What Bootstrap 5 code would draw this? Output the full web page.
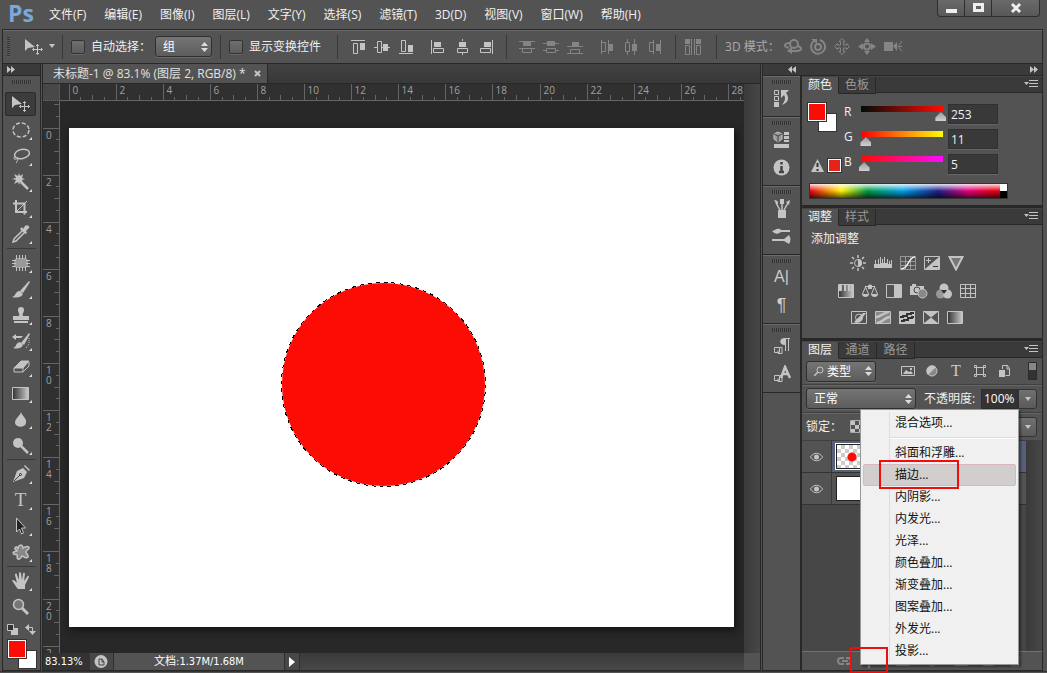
<!DOCTYPE html>
<html lang="zh-CN">
<head>
<meta charset="utf-8">
<meta name="viewport" content="width=device-width, initial-scale=1">
<title>未标题-1 @ 83.1%</title>
<link href="https://cdn.jsdelivr.net/npm/bootstrap@5.3.0/dist/css/bootstrap.min.css" rel="stylesheet">
<script src="https://cdn.jsdelivr.net/npm/bootstrap@5.3.0/dist/js/bootstrap.bundle.min.js"></script>
<style>
:root{--face:#535353;--edge:#282828;--deep:#3a3a3a;--lite:#6a6a6a;--ico:#c4c4c4}
body{font:12px/16px "Open Sans","Noto Sans CJK SC",sans-serif;color:#f0f0f0;background:var(--face);height:100vh;overflow:hidden}
svg{display:block;flex:none;fill:none;stroke:var(--ico)}
button,input,select{font:inherit;color:inherit}
button{border:0;background:none;padding:0}
.s{fill:var(--ico);stroke:none}
.fillonly{fill:var(--ico);stroke:none}
.topbar{height:29px}
.logo{font-size:23px;line-height:26px;font-weight:700;color:#7aa7dc;padding-left:8px;width:40px}
.topbar .nav-link{padding:0 9px;color:#f0f0f0}
.winbtns{border:1px solid #2e2e2e;border-top:0;border-radius:0 0 4px 4px;height:17px;margin-right:7px;background:linear-gradient(#6a6a6a,#585858);overflow:hidden}
.winbtns button{width:27px;height:16px;display:grid;place-items:center;border-right:1px solid #2e2e2e}
.winbtns button:last-child{width:47px;border:0}
.options{height:35px;margin:0 4px 0 2px;border:1px solid var(--edge);box-shadow:inset 0 1px var(--lite);color:#f0f0f0}
.grip-v{width:3px;height:20px;background:repeating-linear-gradient(#333 0 1px,#5c5c5c 1px 2px);margin-left:4px}
.vr-dark{width:1px;height:24px;background:#383838;flex:none}
.tick{appearance:none;width:14px;height:14px;margin:0;border:1px solid #333;border-radius:2px;background:linear-gradient(#707070,#5c5c5c);box-shadow:0 1px #666}
.tick:checked{background:#bbb}
.drop{appearance:none;height:21px;border:1px solid #2f2f2f;border-radius:3px;padding:0 16px 0 7px;line-height:17px;color:#fff;box-shadow:0 1px #686868;background:url("data:image/svg+xml,%3Csvg xmlns='http://www.w3.org/2000/svg' width='7' height='10'%3E%3Cpath d='M0 4L3.5 0 7 4zM0 6L3.5 10 7 6z' fill='%23ddd'/%3E%3C/svg%3E") no-repeat right 3px center,linear-gradient(#757575,#5c5c5c)}
.dim svg{stroke:#858585}.dim .s{fill:#858585}
.g24{display:flex;gap:8px}
.gap-l{margin-left:14px}
.gap-m{margin-left:6px}
.toolbox{width:39px;border:1px solid var(--edge);border-top:0;margin-left:2px;flex:none}
.strip{height:12px;background:var(--deep);border-bottom:1px solid var(--edge);flex:none}
.grip-h{width:20px;height:4px;background:repeating-linear-gradient(90deg,#303030 0 1px,#5c5c5c 1px 2px);margin:4px auto 0;flex:none}
.tools{margin-top:7px;flex:none}
.tool{height:26px;width:31px;display:grid;place-items:center;position:relative;margin-left:2px}
.tool.on{height:24px;margin-top:1px;margin-bottom:1px;background:#3c3c3c;border:1px solid #2b2b2b;border-radius:2px}
.tool.sub::after{content:"";position:absolute;right:4px;bottom:3px;border-left:3px solid transparent;border-bottom:3px solid #ddd}
.cut{height:1px;margin:1px 4px;background:#3a3a3a;flex:none}
.duo{position:relative;width:30px;height:30px}
.duo i{position:absolute;width:19px;height:19px;border:1px solid #333}
.duo .bg{right:0;bottom:0;background:#fff}
.duo .fg{left:0;top:0;background:#fd0b05;box-shadow:inset 0 0 0 1px #fff;width:20px;height:20px}
.doc{margin:0 1px;border:1px solid var(--edge);border-top:0;min-width:0}
.tabs{height:20px;background:linear-gradient(#424242,#383838);border-bottom:1px solid var(--edge);flex:none}
.doctab{background:var(--face);border-right:1px solid var(--edge);padding:0 6px 0 10px;color:#e2e2e2;height:19px;line-height:19px}
.ruler{background:#303030;stroke:#656565;shape-rendering:crispEdges}
.ruler text{fill:#a0a0a0;stroke:none;font-size:10px}
.corner{width:17px;height:17px;background:#484848;border-right:1px dotted #666;border-bottom:1px dotted #666;flex:none}
.bench{background:#282828;min-width:0;min-height:0;overflow:hidden;padding:27px 0 0 9px}
.sheet{width:665px;height:499px;background:#fff;box-shadow:2px 3px 8px #111}
.vscroll{width:16px;background:linear-gradient(90deg,#3a3a3a,#474747);flex:none}
.status{height:17px;background:#333;flex:none;font-family:"DejaVu Sans Condensed","Noto Sans CJK SC",sans-serif;font-size:11px;color:#fff}
.status>*{height:17px;line-height:17px}
.zoomin{width:47px;border:0;background:#333;padding:0 2px;color:#fff}
.seg{background:#484848;border-right:1px solid #2f2f2f}
.hscroll{background:linear-gradient(#3a3a3a,#484848)}
.side{width:281px;flex:none;border:1px solid var(--edge);border-top:0;margin-right:4px}
.dock{width:38px;border-right:1px solid var(--edge);flex:none}
.dgroup{border-bottom:1px solid var(--edge);box-shadow:inset 0 1px var(--lite);display:flow-root;padding-bottom:4px}
.dgroup button{height:28px;width:100%;display:grid;place-items:center}
.dgroup .grip-h{margin-bottom:0}
.panels{min-width:0}
.panel{border-left:1px solid var(--edge)}
.ptabs{height:17px;background:var(--deep);flex:none;border-top:1px solid #444}
.ptabs button{width:37px;height:17px;line-height:16px;color:#999;border-right:1px solid var(--edge);border-bottom:1px solid var(--edge)}
.ptabs .wide{width:38px}
.ptabs .now{background:var(--face);color:#f0f0f0;border-bottom-color:var(--face)}
.ptabs .rest{border-bottom:1px solid var(--edge)}
.pgap{border-bottom:3px solid var(--edge)}
.clr{height:112px;padding:9px 4px 0 5px}
.chips{width:37px;height:70px}
.chans{padding-top:2px}
.chan{height:25px}
.chan label{width:13px;height:18px}
.chan input[type=text]{width:50px;height:20px;background:#393939;border:1px solid #303030;box-shadow:0 1px #666;padding:0 2px;margin-left:1px}
.hue{appearance:none;width:90px;height:19px;margin:0;background:var(--ramp) no-repeat 4px 2px/82px 6px}
.hue::-webkit-slider-runnable-track{height:19px}
.hue::-webkit-slider-thumb{appearance:none;width:11px;height:9px;margin-top:8px;background:linear-gradient(#999,#d0d0d0);clip-path:polygon(50% 0,100% 60%,100% 100%,0 100%,0 60%)}
.red{--ramp:linear-gradient(90deg,#000b05,#ff0b05)}.green{--ramp:linear-gradient(90deg,#fd0005,#fdff05)}.blue{--ramp:linear-gradient(90deg,#fd0b00,#fd0bff)}
.spectrum{width:199px;height:16px;border:1px solid #333;margin-left:2px;background:linear-gradient(90deg,#fff0 190px,#fff 190px) 0 0/100% 7px no-repeat,linear-gradient(90deg,#0000 190px,#000 190px),linear-gradient(#fffd,#fff0 50%,#000a),linear-gradient(90deg,#e60012,#fff100 16%,#009944 29%,#00a0e9 47%,#1d2088 65%,#e4007f 80%,#e60012 94%)}
.adj{height:113px;padding:6px 9px}
.adj .rows{width:192px;gap:12px}
.frow{height:27px;padding:0 5px 0 4px;border-bottom:1px solid #404040;box-shadow:0 1px #666;flex:none}
.frow.tall{height:28px}
.arrowbtn{width:19px;height:20px;border:1px solid #333;border-radius:0 3px 3px 0;background:linear-gradient(#707070,#5a5a5a);display:grid;place-items:center}
.opac{width:37px;height:20px;background:#333;border:1px solid #2d2d2d;padding:0 2px;color:#fff}
.layers{background:#474747;min-height:0}
.layer{height:32px;border-bottom:1px solid #333;background:var(--face)}
.layer .eye{width:30px;height:31px;display:grid;place-items:center;background:var(--face);border-right:1px solid #3a3a3a}
.layer.cur{background:#566179}
.thumb{width:31px;height:25px;border:1px solid #222;margin-left:4px;background:#fff}
.thumb.chk{background:radial-gradient(circle at 15px 12px,#fd0b05 4px,#0000 5px),repeating-conic-gradient(#ccc 0 25%,#fff 0 50%) 0 0/8px 8px;outline:1px solid #fff}
.foot{height:19px;border-top:1px solid #707070;flex:none;padding-left:35px;gap:15px;position:relative}
.fxmenu{position:absolute;right:23px;bottom:5px;width:159px;height:256px;background:#f0f0f0;border:1px solid #979797;box-shadow:2px 2px 2px #0006;padding:2px;color:#000;list-style:none;margin:0}
.fxmenu button{display:block;width:100%;height:22px;text-align:left;padding-left:31px;border:1px solid transparent;border-radius:2px;color:#111;line-height:20px}
.fxmenu .hot{background:#d1cecd;border-color:#dbb6bb}
.fxmenu hr{margin:3px 0 3px 27px;border:0;height:2px;background:#ddd;opacity:1;border-bottom:1px solid #fff}
.fxmenu::before{content:"";position:absolute;left:28px;top:2px;bottom:2px;width:1px;background:#dedede}
.fxmenu li{position:relative}
.mark-item::after{content:"";position:absolute;left:16px;top:-4px;width:80px;height:29px;border:2px solid #f00d0d}
.mark-fx{position:absolute;left:48px;top:-4px;width:38px;height:26px;border:2px solid #f00d0d}
.base{height:2px;border-top:1px solid #333;flex:none}
</style>
</head>
<body class="d-flex flex-column">

<svg width="0" height="0" class="position-absolute">
<defs>
<linearGradient id="fade"><stop stop-color="#333"/><stop offset="1" stop-color="#ccc"/></linearGradient>
<symbol id="move" viewBox="0 0 20 18"><path class="s" d="M1 1v12l3-3 7-1z"/><path d="M13.500 6.500v10M8.500 11.500h10M12 8l1.500-1.500L15 8M12 15l1.500 1.500L15 15M10 10l-1.500 1.500L10 13M17 10l1.500 1.500L17 13"/></symbol>
</defs></svg>

<header class="topbar d-flex flex-shrink-0">
  <div class="logo">Ps</div>
  <nav class="nav flex-nowrap align-items-center flex-grow-1">
    <a class="nav-link" href="#">文件(F)</a><a class="nav-link" href="#">编辑(E)</a><a class="nav-link" href="#">图像(I)</a><a class="nav-link" href="#">图层(L)</a><a class="nav-link" href="#">文字(Y)</a><a class="nav-link" href="#">选择(S)</a><a class="nav-link" href="#">滤镜(T)</a><a class="nav-link" href="#">3D(D)</a><a class="nav-link" href="#">视图(V)</a><a class="nav-link" href="#">窗口(W)</a><a class="nav-link" href="#">帮助(H)</a>
  </nav>
  <div class="winbtns d-flex">
    <button aria-label="最小化"><svg width="11" height="12"><path style="fill:#eee" stroke="none" d="M0 7h11v4H0z"/></svg></button>
    <button aria-label="最大化"><svg width="11" height="10"><path d="M1.500 1.500h8v6h-8z" stroke="#eee" stroke-width="3"/></svg></button>
    <button aria-label="关闭"><svg width="12" height="10"><path d="M2 1l8 8M10 1L2 9" stroke="#eee" stroke-width="3"/></svg></button>
  </div>
</header>

<section class="options d-flex align-items-center flex-shrink-0">
  <span class="grip-v"></span>
  <svg class="gap-l" width="20" height="18"><use href="#move"/></svg>
  <svg class="ms-1" width="8" height="5"><path class="s" d="M1 0h6L4 4z"/></svg>
  <span class="vr-dark gap-m me-2"></span>
  <input class="tick" type="checkbox" id="auto"><label for="auto" class="gap-m">自动选择：</label>
  <select class="drop ms-1" style="width:57px" aria-label="选择对象"><option>组</option><option>图层</option></select>
  <span class="vr-dark ms-2 me-2"></span>
  <input class="tick" type="checkbox" id="box"><label for="box" class="gap-m me-3">显示变换控件</label>
  <span class="vr-dark me-2"></span>
  <div class="d-flex">
    <div class="g24 me-3 ms-1">
      <svg width="16" height="16"><path d="M1 1.500h14M3.500 4.500h4v10h-4z"/><path class="s" d="M10 4h5v7h-5z"/></svg>
      <svg width="16" height="16"><path d="M0 8.500h3M8 8.500h8M3.500 2.500h4v11h-4z"/><path class="s" d="M9 5h5v7H9z"/></svg>
      <svg width="16" height="16"><path d="M1 14.500h14M3.500 1.500h4v11h-4z"/><path class="s" d="M10 6h5v7h-5z"/></svg>
    </div>
    <div class="g24 me-2">
      <svg width="16" height="16"><path d="M1.500 1v14M3.500 9.500h10v4h-10z"/><path class="s" d="M4 3h7v5H4z"/></svg>
      <svg width="16" height="16"><path d="M8.500 0v2M8.500 14v2M3.500 9.500h10v4h-10z"/><path class="s" d="M5 3h7v5H5z"/></svg>
      <svg width="16" height="16"><path d="M14.500 1v14M2.500 9.500h10v4h-10z"/><path class="s" d="M6 3h7v5H6z"/></svg>
    </div>
  </div>
  <span class="vr-dark ms-1 me-2"></span>
  <div class="d-flex dim">
    <div class="g24 me-3 ms-1">
      <svg width="16" height="16"><path d="M0 2.500h16M0 9.500h16M3.500 9.500h9v4h-9z"/><path class="s" d="M4 3h8v4H4z"/></svg>
      <svg width="16" height="16"><path d="M0 4.500h16M0 11.500h3M13 11.500h3M3.500 9.500h9v4h-9z"/><path class="s" d="M4 2h8v5H4z"/></svg>
      <svg width="16" height="16"><path d="M0 7.500h16M0 14.500h16M3.500 10.500h9v4h-9z"/><path class="s" d="M5 3h7v4H5z"/></svg>
    </div>
    <div class="g24 me-2">
      <svg width="16" height="16"><path d="M2.500 1v14M9.500 1v14M2.500 3.500h4v9h-4z"/><path class="s" d="M10 5h4v7h-4z"/></svg>
      <svg width="16" height="16"><path d="M4.500 0v3M4.500 13v3M11.500 0v16M2.500 3.500h4v9h-4z"/><path class="s" d="M9 5h5v7H9z"/></svg>
      <svg width="16" height="16"><path d="M6.500 1v14M13.500 1v14M2.500 3.500h4v9h-4z"/><path class="s" d="M9 5h5v7H9z"/></svg>
    </div>
  </div>
  <span class="vr-dark ms-1 me-2"></span>
  <div class="dim"><svg width="18" height="16"><path d="M1.500 6.500h4v9h-4zM12.500 6.500h4v9h-4zM7.500 0v16M10.500 0v16"/><path class="s" d="M1 0h5v5H1zM12 0h5v5h-5z"/></svg></div>
  <span class="vr-dark gap-l me-2"></span>
  <span style="color:#aaa">3D 模式：</span>
  <div class="g24 dim ms-1">
    <svg width="18" height="17"><circle cx="10" cy="6" r="4" stroke-width="2"/><path stroke-width="2" d="M6 5c-6 0-7 4-1 5M14 8c5 2 4 5-3 5H6"/><path class="s" d="M8 9v7l-5-3z"/></svg>
    <svg width="16" height="17"><circle cx="8" cy="9" r="3" stroke-width="2"/><path stroke-width="2" d="M4 3a7 7 0 1 0 6-1"/><path class="s" d="M1 1h6v5z"/></svg>
    <svg width="16" height="17"><path d="M8 .5l3 3H9.500v3.500h3V5.500l3 3-3 3V10h-3v3.500H11l-3 3-3-3h1.500V10h-3v1.500l-3-3 3-3V7h3V3.500H5z"/></svg>
    <svg width="18" height="17"><circle cx="9" cy="8.500" r="3" stroke-width="2"/><path class="s" d="M6 4l3-4 3 4zM6 13l3 4 3-4zM5 5L0 8.500 5 12zM13 5l5 3.500L13 12z"/></svg>
    <svg width="19" height="17"><path class="s" d="M0 4h9v9H0zM9 8l4-4v9z"/><path d="M18 3l-4 5.500 4 5M15 8.500h3"/></svg>
  </div>
</section>

<main class="d-flex flex-grow-1" style="min-height:0">
  <aside class="toolbox d-flex flex-column">
    <div class="strip d-flex align-items-center ps-1"><svg width="8" height="7"><path class="s" d="M0 0l4 3.500L0 7zM4 0l4 3.500L4 7z"/></svg></div>
    <div class="grip-h"></div>
    <div class="tools">
      <button class="tool on" aria-label="移动"><svg width="20" height="18"><use href="#move"/></svg></button>
      <button class="tool sub" aria-label="椭圆选框"><svg width="18" height="16"><ellipse cx="9" cy="8" rx="8" ry="7" stroke-dasharray="4 2" stroke-width="1.500"/></svg></button>
      <button class="tool sub" aria-label="套索"><svg width="18" height="16"><ellipse cx="10" cy="6" rx="7.500" ry="4.500" transform="rotate(-12 10 6)" stroke-width="1.500"/><path d="M3 9c-2 1-1 3 1 2s2 2 0 4"/></svg></button>
      <button class="tool sub" aria-label="魔棒"><svg width="18" height="18"><path class="s" d="M7 0l1 3 3-2-1 4 3 1-3 1 1 4-3-2-1 3-1-3-4 2 2-4-4-1 4-1-2-4 4 2z"/><path d="M9 9l7 7" stroke-width="2.500"/></svg></button>
      <button class="tool sub" aria-label="裁剪"><svg width="18" height="18"><path d="M4 1v12h11M1 4.500h11.500v11" stroke-width="2"/><path d="M5 12L15 2"/></svg></button>
      <button class="tool sub" aria-label="吸管"><svg width="18" height="18"><path d="M10 6l-8 8-1 3 3-1 8-8" stroke-width="1.500"/><path class="s" d="M10 2l1 2 2-3c2-2 5 0 4 2l-3 3 1 2-2 1-5-5z"/></svg></button>
      <div class="cut"></div>
      <button class="tool sub" aria-label="修补"><svg width="18" height="16"><rect style="fill:#999" stroke="none" x="2" y="3" width="14" height="10" rx="4"/><path d="M4.500 0v4M7.500 0v4M10.500 0v4M13.500 0v4M4.500 12v4M7.500 12v4M10.500 12v4M13.500 12v4M0 5.500h4M0 8.500h4M0 11.500h4M14 5.500h4M14 8.500h4M14 11.500h4"/></svg></button>
      <button class="tool sub" aria-label="画笔"><svg width="18" height="17"><path class="s" d="M17 0l1 1-7 11-3-2zM8 10l3 3c-2 4-7 4-11 3 4-1 3-6 8-6z"/></svg></button>
      <button class="tool sub" aria-label="图章"><svg width="18" height="17"><path class="s" d="M6 3a3 3 0 0 1 6 0c0 3-2 3-1 6h6v4H1V9h6c1-3-1-3-1-6zM2 14h14v2H2z"/></svg></button>
      <button class="tool sub" aria-label="历史记录画笔"><svg width="18" height="17"><path class="s" d="M17 0l1 1-6 11-3-2zM8 9l3 3c-2 4-6 4-10 3 4-1 2-5 7-6zM0 4l4-3v2h7l-2 2H4v2z"/><path stroke-dasharray="1 1" d="M17 5v6l-3 4"/></svg></button>
      <button class="tool sub" aria-label="橡皮擦"><svg width="18" height="16"><path class="s" d="M9 2h8l-6 7H2z"/><path d="M17 3v4l-6 6H2V9l7-7h8l-6 7v4M2 9h9"/></svg></button>
      <button class="tool sub" aria-label="渐变"><svg width="17" height="13"><path fill="url(#fade)" d="M.5.500h16v12H.5z"/></svg></button>
      <button class="tool sub" aria-label="模糊"><svg width="14" height="17"><path class="s" d="M7 1c1 4 6 6 5 11-1 5-10 5-11 0C1 7 6 5 7 1z"/></svg></button>
      <button class="tool sub" aria-label="减淡"><svg width="18" height="17"><circle class="s" cx="6" cy="6" r="5"/><path stroke-width="2.500" d="M9 9l7 7"/></svg></button>
      <div class="cut"></div>
      <button class="tool sub" aria-label="钢笔"><svg width="18" height="18"><path class="s" d="M11 3l4 4-3 6-11 4 4-11zM12 1l1-1 5 5-1 1z"/><path stroke="#444" d="M2 16l6-6"/><circle cx="8.500" cy="9.500" r="1" stroke="#333"/></svg></button>
      <button class="tool sub" aria-label="文字" style="font:19px/22px 'Liberation Serif',serif;color:#c4c4c4">T</button>
      <button class="tool sub" aria-label="路径选择"><svg width="14" height="18"><path fill="#222" d="M2.500 1v14l3-3 2 5 2-1-2-5h4z"/></svg></button>
      <button class="tool sub" aria-label="自定形状"><svg width="18" height="16"><path fill="#888" stroke-width="1.500" d="M6 5c0-5 5-5 5-1 3-2 6-2 6 0s-3 2-3 4 3 3 2 5-4 0-6-1c-1 2-2 4-4 3s0-3-1-4-4 0-4-2 3-1 4-2-3-1-2-3 2-1 3 1z"/></svg></button>
      <div class="cut"></div>
      <button class="tool sub" aria-label="抓手"><svg width="18" height="18"><path class="s" d="M5 16L1 10c-2-2 0-3 2-1l2 2L3 3c0-2 2-2 2 0l2 5V1c0-1 2-1 2 0l1 7 1-6c0-2 2-1 2 0l-1 7 3-4c1-2 2-1 2 0l-4 8v4H6z"/></svg></button>
      <button class="tool" aria-label="缩放"><svg width="18" height="18"><circle cx="6.500" cy="6.500" r="5" fill="#777" stroke-width="1.500"/><path stroke-width="3" d="M10 10l6 6"/></svg></button>
    </div>
    <div class="d-flex justify-content-between px-1 pt-1 flex-shrink-0">
      <svg width="11" height="11"><path class="s" d="M4 4h7v7H4z"/><path fill="#333" d="M.5.500h6v6h-6z"/></svg>
      <svg width="11" height="11"><path d="M2 3.500h5.500V9"/><path class="s" d="M0 3.500L4 0v7zM4 7h7l-3.500 4z"/></svg>
    </div>
    <div class="duo ms-1 mt-1 flex-shrink-0"><i class="bg"></i><i class="fg"></i></div>
  </aside>

  <section class="doc d-flex flex-column flex-grow-1">
    <div class="tabs d-flex"><div class="doctab d-flex align-items-center"><span>未标题-1 @ 83.1% (图层 2, RGB/8) *</span><button class="ms-2" aria-label="关闭文档"><svg width="7" height="7"><path stroke-width="2" d="M1 1l5 5M6 1L1 6"/></svg></button></div></div>
    <div class="d-flex flex-grow-1" style="min-height:0">
      <div class="d-flex flex-column flex-grow-1" style="min-width:0">
        <div class="d-flex flex-shrink-0"><div class="corner"></div><svg id="rulerX" class="ruler flex-grow-1" width="10" height="17"></svg></div>
        <div class="d-flex flex-grow-1" style="min-height:0">
          <svg id="rulerY" class="ruler" width="17" height="100%"></svg>
          <div class="bench flex-grow-1">
            <div class="sheet"><svg width="665" height="499"><circle cx="314.500" cy="256.500" r="102" fill="#fd0b05" stroke="#fff"/><circle cx="314.500" cy="256.500" r="102" stroke="#000" stroke-dasharray="4 4" shape-rendering="crispEdges"/></svg></div>
          </div>
        </div>
      </div>
      <div class="vscroll"></div>
    </div>
    <div class="status d-flex">
      <input class="zoomin" type="text" value="83.13%" aria-label="显示比例">
      <span class="seg d-flex align-items-center"><svg class="mx-1" width="15" height="13"><circle class="s" cx="7" cy="6.500" r="6.500"/><path stroke="#444" d="M5 4v6h5V7L8 4H5M8 4v3h2"/></svg></span>
      <span class="seg text-center" style="width:171px;background:#535353">文档:1.37M/1.68M</span>
      <button class="seg px-1" aria-label="状态菜单"><svg width="6" height="10"><path fill="#fff" stroke="none" d="M0 0l6 5-6 5z"/></svg></button>
      <span class="hscroll flex-grow-1"></span><span style="width:16px;background:#535353"></span>
    </div>
  </section>

  <aside class="side d-flex flex-column">
    <div class="strip d-flex align-items-center justify-content-between">
      <svg style="margin-left:25px" width="8" height="7"><path class="s" d="M4 0L0 3.500 4 7zM8 0L4 3.500 8 7z"/></svg>
      <svg class="me-1" width="8" height="7"><path class="s" d="M0 0l4 3.500L0 7zM4 0l4 3.500L4 7z"/></svg>
    </div>
    <div class="d-flex flex-grow-1" style="min-height:0">
      <nav class="dock">
        <div class="dgroup"><div class="grip-h"></div>
          <button aria-label="历史记录"><svg width="17" height="18"><path d="M1.500 1.500h4v4h-4zM1.500 7.500h4v4h-4z"/><path class="s" d="M1 13h5v5H1zM8 1h8l-3 3c4 5 2 10-4 12 3-4 4-7 2-10L8 9z"/></svg></button></div>
        <div class="dgroup"><div class="grip-h"></div>
          <button aria-label="属性"><svg width="17" height="17"><path class="s" d="M11 1h5v3h-5zM11 5h5v3h-5zM11 9h5v2h-5zM1 13h15v4H1z"/><path fill="#999" d="M5 1l4 2v5l-4 3-4-3V3z"/><path stroke="#444" d="M1 3l4 2 4-2M5 5v6"/></svg></button>
          <button aria-label="信息"><svg width="17" height="17"><circle class="s" cx="8.500" cy="8.500" r="8"/><path stroke="#444" stroke-width="2.500" d="M8.500 3v2.500M8.500 7v6M6 13h5"/></svg></button></div>
        <div class="dgroup"><div class="grip-h"></div>
          <button aria-label="画笔预设"><svg width="17" height="19"><path class="s" d="M5 11h8v8H5zM1 1c4 0 5 3 3 5zM7 0h4v5H7zM13 3l4-2-1 5z"/><path stroke-width="1.500" d="M3 4l4 7M9 4v7M15 4l-4 7"/></svg></button>
          <button aria-label="画笔"><svg width="19" height="16"><path class="s" d="M0 3c3 0 4-3 8-2l1 1h9v2H9C5 7 3 6 0 3zM0 11h12l5-4c2 3 2 6 0 9l-5-3H0z"/></svg></button></div>
        <div class="dgroup"><div class="grip-h"></div>
          <button aria-label="字符" style="font:16px/18px 'Liberation Sans',sans-serif;color:#ccc">A|</button>
          <button aria-label="段落" style="font:18px/18px 'Liberation Sans',sans-serif;color:#ccc">¶</button></div>
        <div class="dgroup"><div class="grip-h"></div>
          <button aria-label="段落样式"><svg width="18" height="18"><path d="M1.500 10.500h5v5h-5zM5 13.500v3h4v-6H7M12.500 1v13M15.500 1v13"/><path class="s" d="M13 1c-7-1-8 7-1 7z"/><path d="M11 1.500h6"/></svg></button>
          <button aria-label="字符样式"><svg width="18" height="18"><path d="M1.500 10.500h5v5h-5zM5 13.500v3h4v-6H7"/><path stroke-width="2.500" d="M8 13l4-11 5 11M9.500 9h6"/></svg></button></div>
      </nav>

      <div class="panels d-flex flex-column flex-grow-1">
        <section class="panel pgap">
          <div class="ptabs d-flex"><button class="now">颜色</button><button>色板</button><span class="rest flex-grow-1 d-flex justify-content-end align-items-center pe-1"><svg width="14" height="9"><path d="M5 .5h9M5 3.500h9M5 6.500h9"/><path class="s" d="M0 2h5L2.500 5z"/></svg></span></div>
          <div class="clr">
            <div class="d-flex">
              <div class="chips d-flex flex-column justify-content-between">
                <div class="duo"><i class="bg"></i><i class="fg"></i></div>
                <div class="d-flex align-items-center gap-1 ms-1"><svg width="13" height="13"><path class="s" d="M6.500 0L13 13H0z"/><path stroke="#333" stroke-width="2" d="M6.500 4v4M6.500 10v2"/></svg><span style="width:13px;height:13px;border:1px solid #fff;background:#e6231a;outline:1px solid #333"></span></div>
              </div>
              <div class="chans">
                <div class="chan d-flex"><label for="rv">R</label><input class="hue red" type="range" max="255" value="253" aria-label="R"><input id="rv" type="text" value="253"></div>
                <div class="chan d-flex"><label for="gv">G</label><input class="hue green" type="range" max="255" value="11" aria-label="G"><input id="gv" type="text" value="11"></div>
                <div class="chan d-flex"><label for="bv">B</label><input class="hue blue" type="range" max="255" value="5" aria-label="B"><input id="bv" type="text" value="5"></div>
              </div>
            </div>
            <div class="spectrum mt-1"></div>
          </div>
        </section>

        <section class="panel pgap">
          <div class="ptabs d-flex"><button class="now">调整</button><button>样式</button><span class="rest flex-grow-1 d-flex justify-content-end align-items-center pe-1"><svg width="14" height="9"><path d="M5 .5h9M5 3.500h9M5 6.500h9"/><path class="s" d="M0 2h5L2.500 5z"/></svg></span></div>
          <div class="adj">
            <div>添加调整</div>
            <div class="rows d-flex flex-column mt-2">
              <div class="d-flex justify-content-center gap-2">
                <svg width="16" height="16"><circle cx="8" cy="8" r="3.500"/><path class="s" d="M8 4a4 4 0 0 1 0 8z"/><path stroke-width="1.500" d="M8 0v3M8 13v3M0 8h3M13 8h3M2 2l2 2M12 12l2 2M14 2l-2 2M4 12l-2 2"/></svg>
                <svg width="18" height="16"><path class="s" d="M0 13V9h1V5h1v4h2V4h1v5h1V2h1v6h1V4h1v4h1V2h1v6h2V4h1v5h1V6h1v3h1V5h1v8z"/></svg>
                <svg width="16" height="16"><path d="M.5 1.500h15v13H.5zM5.500 2v12M10.500 2v12M1 6.500h14M1 10.500h14" opacity=".6"/><path stroke="#eee" stroke-width="1.500" d="M1 14c8 0 7-12 14-12"/></svg>
                <svg width="16" height="16"><path d="M.5 1.500h15v13H.5z"/><path class="s" d="M15 2v12H1z"/><path d="M2 5.500h5M4.500 3v5"/><path stroke="#333" d="M9 11.500h5"/></svg>
                <svg width="16" height="16"><path fill="#777" stroke-width="2" d="M1.500 2h13L8 14.500z"/></svg>
              </div>
              <div class="d-flex justify-content-center gap-2">
                <svg width="16" height="16"><path fill="url(#fade)" d="M.5 1.500h15v13H.5z"/><path class="s" d="M1 2h3v6H1zM6 2h2v6H6zM10 2h2v6h-2zM13 2h2v6h-2z"/></svg>
                <svg width="16" height="16"><path d="M8 1v4M3 3.500h10M3.500 4l-3 7M3.500 4l3 7M12.500 4l-3 7M12.500 4l3 7"/><path class="s" d="M0 11h7c0 4-7 4-7 0zM9 11h7c0 4-7 4-7 0zM6 2h4v4H6z"/></svg>
                <svg width="16" height="16"><path d="M.5 1.500h15v13H.5z"/><path class="s" d="M8 2h7v12H8z"/></svg>
                <svg width="18" height="16"><path class="s" d="M0 3h2V1h4v2h8v9H0z"/><circle cx="7" cy="7" r="3" stroke="#444"/><circle cx="12.500" cy="10.500" r="4.500" fill="#888"/></svg>
                <svg width="16" height="16"><circle class="s" cx="8" cy="5" r="4.500"/><circle style="fill:#999" stroke="none" cx="4.500" cy="11" r="4.500"/><circle class="s" cx="11.500" cy="11" r="4.500"/><path fill="#333" stroke="none" d="M5 7h6l-3 4z"/></svg>
                <svg width="16" height="16"><path d="M.5 1.500h15v13H.5zM5.500 2v12M10.500 2v12M1 5.500h14M1 10.500h14"/></svg>
              </div>
              <div class="d-flex justify-content-center gap-2">
                <svg width="16" height="14"><path d="M.5.500h15v12H.5z"/><path class="s" d="M3 11l9-9h3l-3 4c-1 6-6 7-9 5z"/><circle cx="8" cy="6.500" r="3.500"/></svg>
                <svg width="16" height="14"><path fill="#888" d="M.5.500h15v12H.5z"/><path stroke-width="2.500" d="M1 6c5 0 8-5 13-5M2 12c5 0 8-6 13-6"/></svg>
                <svg width="16" height="14"><path class="s" d="M0 0h16v13H0z"/><path stroke="#333" stroke-width="2" d="M1 6h3V5h4V3h4V2h3M2 10h3V9h4V7h4V6h2"/></svg>
                <svg width="16" height="14"><path class="s" d="M0 0l8 6.500L16 0zM0 13l8-6.500 8 6.500z"/><path d="M.5.500h15v12H.5z"/></svg>
                <svg width="16" height="14"><path fill="url(#fade)" d="M.5.500h15v12H.5z"/></svg>
              </div>
            </div>
          </div>
        </section>

        <section class="panel d-flex flex-column flex-grow-1 position-relative" style="min-height:0">
          <div class="ptabs d-flex"><button class="now">图层</button><button class="wide">通道</button><button class="wide">路径</button><span class="rest flex-grow-1 d-flex justify-content-end align-items-center pe-1"><svg width="14" height="9"><path d="M5 .5h9M5 3.500h9M5 6.500h9"/><path class="s" d="M0 2h5L2.500 5z"/></svg></span></div>
          <div class="frow d-flex align-items-center">
            <div class="position-relative"><select class="drop" style="width:70px;padding-left:20px" aria-label="过滤"><option>类型</option></select><svg class="position-absolute top-50 translate-middle-y start-0 ms-2" width="10" height="10"><circle cx="6" cy="4" r="3"/><path d="M4 6L0 10" stroke-width="1.500"/></svg></div>
            <div class="d-flex gap-2 ms-auto align-items-center">
              <svg width="16" height="16"><path d="M1.500 3.500h13v9h-13z"/><path class="s" d="M3 11l3-4 3 2 2-1 2 3zM10 5h2v2h-2z"/></svg>
              <svg width="16" height="16"><circle cx="8" cy="8" r="5" fill="#888"/><path class="s" d="M4 12A5.500 5.500 0 0 1 12 4z"/></svg>
              <span class="text-center" style="width:16px;font:16px/16px 'Liberation Serif',serif;color:#ccc">T</span>
              <svg width="16" height="16"><path d="M4.500 4.500h7v7h-7zM2.500 2.500h2v2h-2zM11.500 2.500h2v2h-2zM2.500 11.500h2v2h-2zM11.500 11.500h2v2h-2z"/></svg>
              <svg width="16" height="16"><path d="M6.500 6V2.500h5l2 3v7h-4M11 2v4h3"/><path class="s" d="M3 7h6v7H3z"/></svg>
              <svg class="ms-2" width="9" height="18"><path fill="#333" stroke="#2b2b2b" d="M.5.500h8v17h-8z"/><path fill="#888" stroke="none" d="M1 1h7v7H1z"/></svg>
            </div>
          </div>
          <div class="frow tall d-flex align-items-center">
            <select class="drop" style="width:110px" aria-label="混合模式"><option>正常</option></select>
            <label for="op" class="ms-2 text-nowrap">不透明度:</label>
            <input id="op" class="opac ms-auto" type="text" value="100%"><button class="arrowbtn" aria-label="不透明度滑块"><svg width="6" height="4"><path class="s" d="M0 0h6L3 4z"/></svg></button>
          </div>
          <div class="frow tall d-flex align-items-center"><span class="me-2">锁定：</span><svg width="13" height="13" class="fillonly"><path d="M1 1h4v4H1zM9 1h3v4H9zM5 5h4v4H5zM1 9h4v3H1zM9 9h3v3H9z"/><path fill="none" stroke="#aaa" d="M.5.500h12v12H.5z"/></svg><button class="arrowbtn ms-auto" aria-label="填充滑块"><svg width="6" height="4"><path class="s" d="M0 0h6L3 4z"/></svg></button></div>
          <div class="layers d-flex flex-grow-1">
            <div class="flex-grow-1">
              <div class="layer cur d-flex align-items-center"><button class="eye" aria-label="可见性"><svg width="13" height="10"><path d="M.5 5c3-5 9-5 12 0-3 5-9 5-12 0z"/><circle class="s" cx="6.500" cy="5" r="2.500"/></svg></button><div class="thumb chk"></div></div>
              <div class="layer d-flex align-items-center"><button class="eye" aria-label="可见性"><svg width="13" height="10"><path d="M.5 5c3-5 9-5 12 0-3 5-9 5-12 0z"/><circle class="s" cx="6.500" cy="5" r="2.500"/></svg></button><div class="thumb"></div></div>
            </div>
            <div class="vscroll"></div>
          </div>
          <div class="foot d-flex align-items-center dim">
            <svg width="16" height="10"><path stroke-width="2" d="M7 2H4a3 3 0 0 0 0 6h3M9 2h2a3 3 0 0 1 0 6H9M5 5h6"/></svg>
            <span style="color:#bbb;font:italic 13px/14px 'Liberation Serif',serif">fx.</span>
            <svg width="14" height="12"><path d="M.5.500h13v10H.5z"/></svg>
            <svg width="14" height="12"><circle cx="7" cy="6" r="5"/></svg>
            <svg width="14" height="12"><path d="M.5 1.500h13v9H.5z"/></svg>
            <svg width="12" height="12"><path d="M.5.500h10v10H.5z"/></svg>
            <svg width="10" height="12"><path d="M1.500 2v9h7V2M0 2.500h10M5 3v8"/></svg>
          </div>
          <ul class="fxmenu">
            <li><button>混合选项...</button></li>
            <li><hr></li>
            <li><button>斜面和浮雕...</button></li>
            <li class="mark-item"><button class="hot">描边...</button></li>
            <li><button>内阴影...</button></li>
            <li><button>内发光...</button></li>
            <li><button>光泽...</button></li>
            <li><button>颜色叠加...</button></li>
            <li><button>渐变叠加...</button></li>
            <li><button>图案叠加...</button></li>
            <li><button>外发光...</button></li>
            <li><button>投影...</button></li>
          </ul>
          <div class="position-absolute bottom-0 start-0" style="height:19px"><div class="mark-fx"></div></div>
        </section>
      </div>
    </div>
  </aside>
</main>
<div class="base"></div>

<script>
// Ruler marks: one label every 2 units, with quarter marks between the labels.
const STEP = 47.1;
function rule(svg, vertical, origin, length) {
  let out = '';
  for (let i = -4; i * STEP / 4 + origin < length; i++) {
    const p = Math.floor(origin + i * STEP / 4) + 0.5;
    if (p < 0) continue;
    const major = i % 4 === 0, size = major ? 16 : i % 2 ? 3 : 5;
    out += vertical ? `<path d="M${16 - size} ${p}H16"/>` : `<path d="M${p} ${16 - size}V16"/>`;
    if (major && i >= 0) {
      const n = String(i / 2);
      out += vertical
        ? [...n].map((c, k) => `<text x="3" y="${p + 10.5 + k * 10}">${c}</text>`).join('')
        : `<text x="${p + 3}" y="10">${n}</text>`;
    }
  }
  out += vertical ? '<path d="M16.500 0V2000"/>' : '<path d="M0 16.500H4000"/>';
  svg.innerHTML = out;
}
function draw() {
  rule(rulerX, false, 9, rulerX.parentNode.clientWidth);
  rule(rulerY, true, 27, rulerY.parentNode.clientHeight);
}
draw();
addEventListener('resize', draw);
</script>
</body>
</html>
